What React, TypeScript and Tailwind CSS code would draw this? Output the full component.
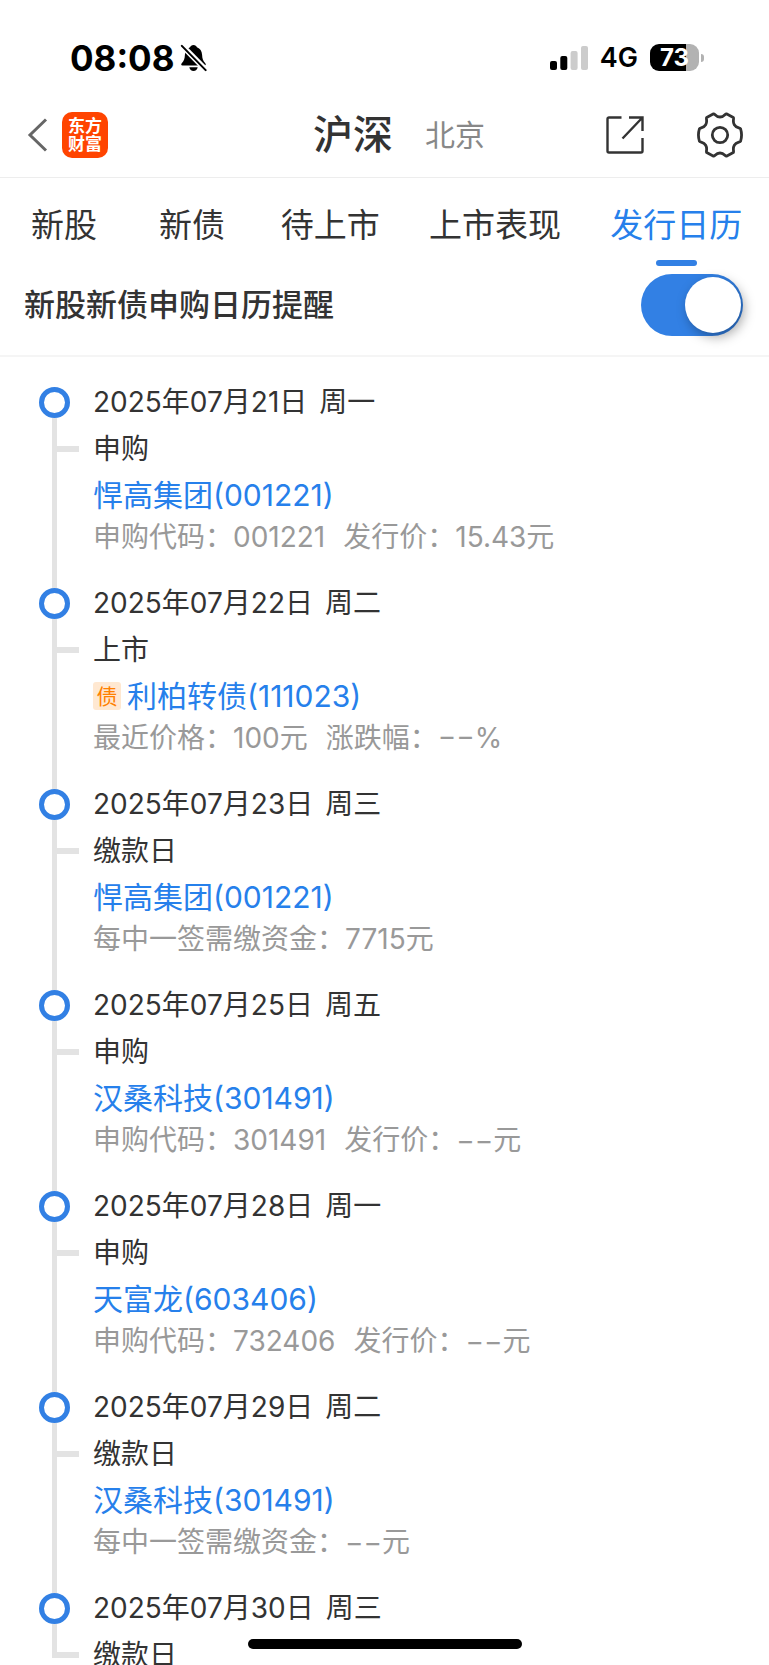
import React, { useState } from 'react';

const tabs = ['新股', '新债', '待上市', '上市表现', '发行日历'];

interface CalendarEntry {
  date: string;
  weekday: string;
  event: string;
  name?: string;
  bond?: boolean;
  details?: string[];
}

const entries: CalendarEntry[] = [
  {
    date: '2025年07月21日',
    weekday: '周一',
    event: '申购',
    name: '悍高集团(001221)',
    details: ['申购代码：001221', '发行价：15.43元']
  },
  {
    date: '2025年07月22日',
    weekday: '周二',
    event: '上市',
    name: '利柏转债(111023)',
    bond: true,
    details: ['最近价格：100元', '涨跌幅：−−%']
  },
  {
    date: '2025年07月23日',
    weekday: '周三',
    event: '缴款日',
    name: '悍高集团(001221)',
    details: ['每中一签需缴资金：7715元']
  },
  {
    date: '2025年07月25日',
    weekday: '周五',
    event: '申购',
    name: '汉桑科技(301491)',
    details: ['申购代码：301491', '发行价：−−元']
  },
  {
    date: '2025年07月28日',
    weekday: '周一',
    event: '申购',
    name: '天富龙(603406)',
    details: ['申购代码：732406', '发行价：−−元']
  },
  {
    date: '2025年07月29日',
    weekday: '周二',
    event: '缴款日',
    name: '汉桑科技(301491)',
    details: ['每中一签需缴资金：−−元']
  },
  {
    date: '2025年07月30日',
    weekday: '周三',
    event: '缴款日'
  }
];

const StatusBar: React.FC = () => (
  <div className="flex h-[94px] shrink-0 items-center pt-[21px] pr-[65px] pl-[70px] text-black">
    <span className="text-[35px] leading-10 font-bold">08:08</span>
    <svg className="ml-1.5 h-7 w-[27px]" viewBox="0 0 28 30" aria-hidden="true">
      <path
        d="M14 1c1.900 0 3.300 1 3.700 2.500 3.400 1.200 5.300 4.300 5.500 8 .2 4.500 1 6.500 3 8.500 1.400 1.500 1.300 3-.4 3H2.200C.5 23 .4 21.500 1.800 20c2-2 2.800-4 3-8.500.2-3.700 2.100-6.800 5.500-8C10.700 2 12.100 1 14 1Z"
        fill="#000"
      />
      <path d="M9.500 25h9c-.4 2.500-2.200 4-4.500 4s-4.100-1.500-4.500-4Z" fill="#000" />
      <path d="M2 2l25.500 26" stroke="#fff" strokeWidth="6" />
      <path d="M1.500 2l25.500 26" stroke="#000" strokeWidth="2.200" strokeLinecap="round" />
    </svg>
    <svg className="ml-auto h-6 w-[38px]" viewBox="0 0 38 24" aria-hidden="true">
      <rect x="0" y="15" width="7" height="9" rx="2" fill="#000" />
      <rect x="10.300" y="10" width="7" height="14" rx="2" fill="#000" />
      <rect x="20.600" y="5" width="7" height="19" rx="2" fill="#ccc" />
      <rect x="31" y="0" width="7" height="24" rx="2" fill="#ccc" />
    </svg>
    <span className="ml-3 text-[27px] leading-8 font-semibold">4G</span>
    <div className="ml-3 flex items-center">
      <div className="flex h-[27px] w-[49px] items-center justify-center rounded-[9px] bg-linear-to-r from-black from-74% to-[#b2b2b2] to-74% text-2xl leading-none font-bold text-white">
        73
      </div>
      <div className="ml-0.5 h-2 w-[3px] rounded-r-full bg-[#b2b2b2]" />
    </div>
  </div>
);

const Header: React.FC = () => (
  <header className="flex h-[84px] shrink-0 items-center border-b border-[#ededed] pr-[26px] pb-0.5 pl-[27px]">
    <button type="button" aria-label="返回">
      <svg className="h-9 w-[22px]" viewBox="0 0 22 36" fill="none" aria-hidden="true">
        <path d="M19 2.500L3 18l16 15.500" stroke="#666" strokeWidth="3" />
      </svg>
    </button>
    <div className="ml-[13px] flex size-[46px] flex-col items-center justify-center rounded-[10px] bg-[#ff4400] text-[17px] leading-[18px] font-bold text-white">
      <span>东方</span>
      <span>财富</span>
    </div>
    <button type="button" className="ml-auto text-[40px] leading-[48px] font-medium text-[#333]">
      沪深
    </button>
    <button type="button" className="ml-8 text-[30px] leading-[48px] font-normal text-[#888]">
      北京
    </button>
    <button type="button" aria-label="分享" className="ml-[121px]">
      <svg className="size-[38px]" viewBox="0 0 38 38" fill="none" stroke="#333" strokeWidth="2.400" aria-hidden="true">
        <path d="M15.500 1.500H3A1.500 1.500 0 0 0 1.500 3v32A1.500 1.500 0 0 0 3 36.500h32a1.500 1.500 0 0 0 1.500-1.500V22" />
        <path d="M23 1.500h13.500V15M36.500 1.500L16.500 22.500" />
      </svg>
    </button>
    <button type="button" aria-label="设置" className="ml-[53px]">
      <svg className="size-[46px]" viewBox="0 0 46 46" fill="none" stroke="#333" strokeWidth="2.800" aria-hidden="true">
        <path
          strokeLinejoin="round"
          d="M16.600 1.800C18 1.600 18.600 5 23 5s5-3.400 6.400-3.200l6.900 3.700c1 1.200-1.100 3.600 1 7.300 2.100 3.600 5.700 2.600 6.300 4 1.300 4.200 1.300 8.200 0 12.400-.6 1.400-4.200.4-6.300 4-2.100 3.700 0 6.100-1 7.300l-6.900 3.700C28 44.400 27.400 41 23 41s-5 3.400-6.400 3.200l-6.900-3.700c-1-1.200 1.100-3.600-1-7.300-2.100-3.600-5.700-2.600-6.300-4-1.300-4.200-1.300-8.200 0-12.400.6-1.400 4.200-.4 6.300-4 2.100-3.700 0-6.100 1-7.300Z"
        />
        <circle cx="23" cy="23" r="7.700" />
      </svg>
    </button>
  </header>
);

const Entry: React.FC<{ entry: CalendarEntry; last: boolean }> = ({ entry, last }) => (
  <li className="flex min-h-[201px]">
    {/* Rail with the ring and the short branch */}
    <div className="flex w-[54px] shrink-0 flex-col">
      <div className="size-[31px] rounded-full border-[5px] border-[#3280e4]" />
      <div className="flex flex-1 pl-[13px]">
        <div className={last ? 'h-[34px] w-[5px] bg-[#e3e3e3]' : 'w-[5px] bg-[#e3e3e3]'} />
        <div className="mt-7 h-1.5 w-[22px] bg-[#e3e3e3]" />
      </div>
    </div>
    <div className="text-[#333]">
      <h2 className="flex gap-3 text-[28px] leading-[31px]">
        <span>{entry.date}</span>
        <span>{entry.weekday}</span>
      </h2>
      <p className="mt-4 text-[28px] leading-[31px]">{entry.event}</p>
      {entry.name && (
        <div className="mt-3 flex items-center gap-1.5">
          {entry.bond && (
            <span className="flex size-7 items-center justify-center rounded-[3px] bg-[#ffe8d1] text-[21px] leading-none text-[#ff8000]">
              债
            </span>
          )}
          <a href="#" className="text-[30px] leading-9 text-[#2680eb]">
            {entry.name}
          </a>
        </div>
      )}
      {entry.details && (
        <p className="mt-1.5 flex gap-[18px] text-[28px] leading-9 text-[#999]">
          {entry.details.map((detail) => (
            <span key={detail}>{detail}</span>
          ))}
        </p>
      )}
    </div>
  </li>
);

const App: React.FC = () => {
  const [active, setActive] = useState('发行日历');
  const [reminder, setReminder] = useState(true);

  return (
    <div className="relative flex h-screen flex-col overflow-hidden bg-white font-[Inter,'Noto_Sans_CJK_SC',sans-serif]">
      <StatusBar />
      <Header />

      {/* Tabs */}
      <nav className="flex h-[92px] shrink-0 pr-0.5">
        {tabs.map((tab) => (
          <button
            key={tab}
            type="button"
            onClick={() => setActive(tab)}
            className={`flex min-w-32 flex-auto flex-col items-center px-6 pt-[23px] text-[33px] leading-[48px] whitespace-nowrap ${
              active === tab ? 'text-[#2680eb]' : 'text-[#333]'
            }`}
          >
            {tab}
            {active === tab && <span className="mt-[11px] h-1.5 w-[41px] rounded-full bg-[#3280e4]" />}
          </button>
        ))}
      </nav>

      {/* Reminder switch */}
      <div className="flex shrink-0 items-center justify-between border-b-2 border-[#f5f5f5] pt-1 pr-[26px] pb-[19px] pl-6">
        <label htmlFor="reminder" className="text-[31px] leading-[48px] font-medium text-[#333]">
          新股新债申购日历提醒
        </label>
        <input
          id="reminder"
          type="checkbox"
          checked={reminder}
          onChange={(e) => setReminder(e.target.checked)}
          className="flex h-[62px] w-[102px] appearance-none items-center rounded-full bg-gray-300 px-0.5 before:size-14 before:rounded-full before:bg-white before:shadow-[3px_4px_12px_rgba(0,0,0,0.35)] checked:justify-end checked:bg-[#3280e4]"
        />
      </div>

      {/* Calendar timeline */}
      <ul className="min-h-0 flex-1 overflow-y-auto pt-[30px] pl-[39px] [scrollbar-width:none]">
        {entries.map((entry, i) => (
          <Entry key={entry.date} entry={entry} last={i === entries.length - 1} />
        ))}
      </ul>

      {/* Home indicator */}
      <div className="absolute inset-x-0 bottom-4 mx-auto h-2.5 w-[274px] rounded-full bg-black" />
    </div>
  );
};

export default App;
